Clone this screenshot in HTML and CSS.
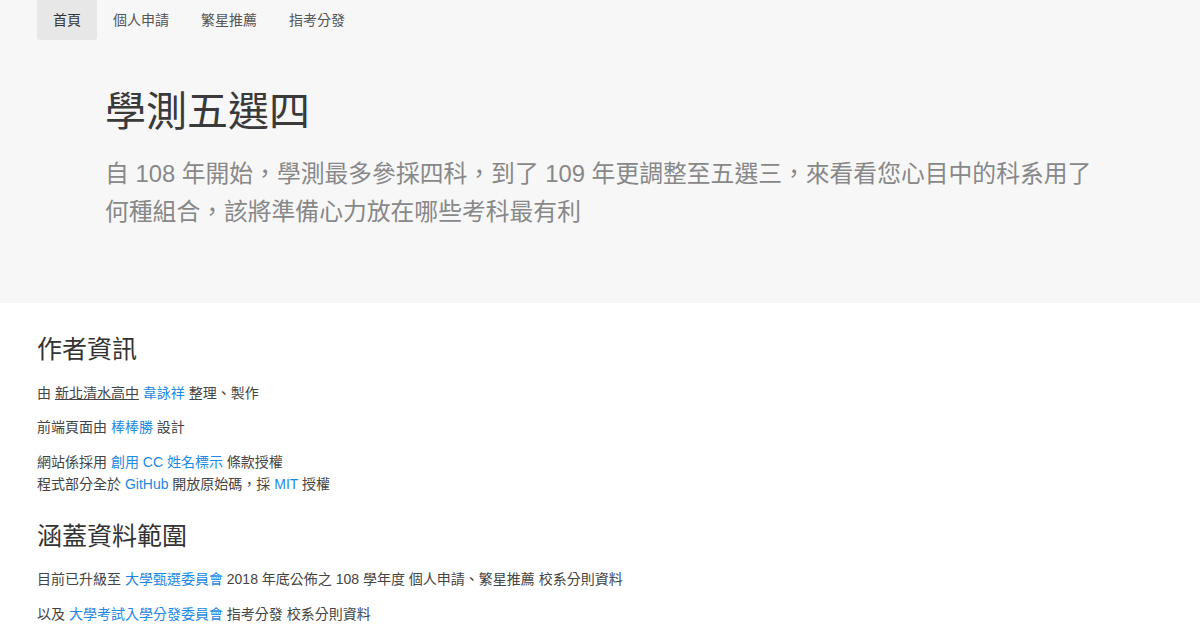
FILE: index.html
```html
<!DOCTYPE html>
<html lang="zh-Hant">

<head>
    <meta charset="UTF-8">
    <meta name="viewport" content="width=device-width, initial-scale=1.0">
    <title>學測五選四</title>
    <link rel="stylesheet" href="styles.css">
</head>

<body>
    <header class="top">
        <nav class="nav">
            <a class="nav-item active" href="#">首頁</a>
            <a class="nav-item" href="#">個人申請</a>
            <a class="nav-item" href="#">繁星推薦</a>
            <a class="nav-item" href="#">指考分發</a>
        </nav>
        <div class="hero">
            <h1>學測五選四</h1>
            <p class="lead">自 108 年開始，學測最多參採四科，到了 109 年更調整至五選三，來看看您心目中的科系用了何種組合，該將準備心力放在哪些考科最有利</p>
        </div>
    </header>

    <main class="content">
        <h2>作者資訊</h2>
        <p>由 <a class="plain" href="#">新北清水高中</a> <a href="#">韋詠祥</a> 整理、製作</p>
        <p>前端頁面由 <a href="#">棒棒勝</a> 設計</p>
        <p>網站係採用 <a href="#">創用 CC 姓名標示</a> 條款授權<br>程式部分全於 <a href="#">GitHub</a> 開放原始碼，採 <a href="#">MIT</a> 授權</p>

        <h2>涵蓋資料範圍</h2>
        <p>目前已升級至 <a href="#">大學甄選委員會</a> 2018 年底公佈之 108 學年度 個人申請、繁星推薦 校系分則資料</p>
        <p>以及 <a href="#">大學考試入學分發委員會</a> 指考分發 校系分則資料</p>
    </main>
</body>

</html>
```

FILE: styles.css
```css
body {
    font-family: "Liberation Sans", Arial, "Noto Sans CJK TC", sans-serif;
    font-size: 14px;
    line-height: 1.5;
    color: #444;
    background-color: #fff;
    margin: 0;
}

a {
    color: #1e88e5;
    text-decoration: none;
}

.top {
    background-color: #f7f7f7;
    padding-bottom: 72px;
}

.nav {
    display: flex;
    padding: 0 37px;
    height: 40px;
}

.nav-item {
    display: flex;
    align-items: center;
    padding: 0 16px;
    color: #555;
    font-size: 14px;
}

.nav-item.active {
    background-color: #e7e7e7;
    border-radius: 0 0 3px 3px;
    color: #333;
}

.hero {
    padding: 48px 100px 0 105px;
}

.hero h1 {
    font-size: 41px;
    font-weight: 400;
    color: #3a3a3a;
    margin: 0 0 18px;
    line-height: 1.2;
}

.lead {
    font-size: 23.8px;
    line-height: 38px;
    color: #888;
    margin: 0;
}

.content {
    padding: 30px 37px;
}

.content h2 {
    font-size: 25px;
    font-weight: 400;
    color: #333;
    margin: 0 0 16px;
    line-height: 1.3;
}

.content p {
    margin: 0 0 12.5px;
    line-height: 22px;
}

.content p + h2 {
    margin-top: 25px;
}

.plain {
    color: #444;
    text-decoration: underline;
}
```
